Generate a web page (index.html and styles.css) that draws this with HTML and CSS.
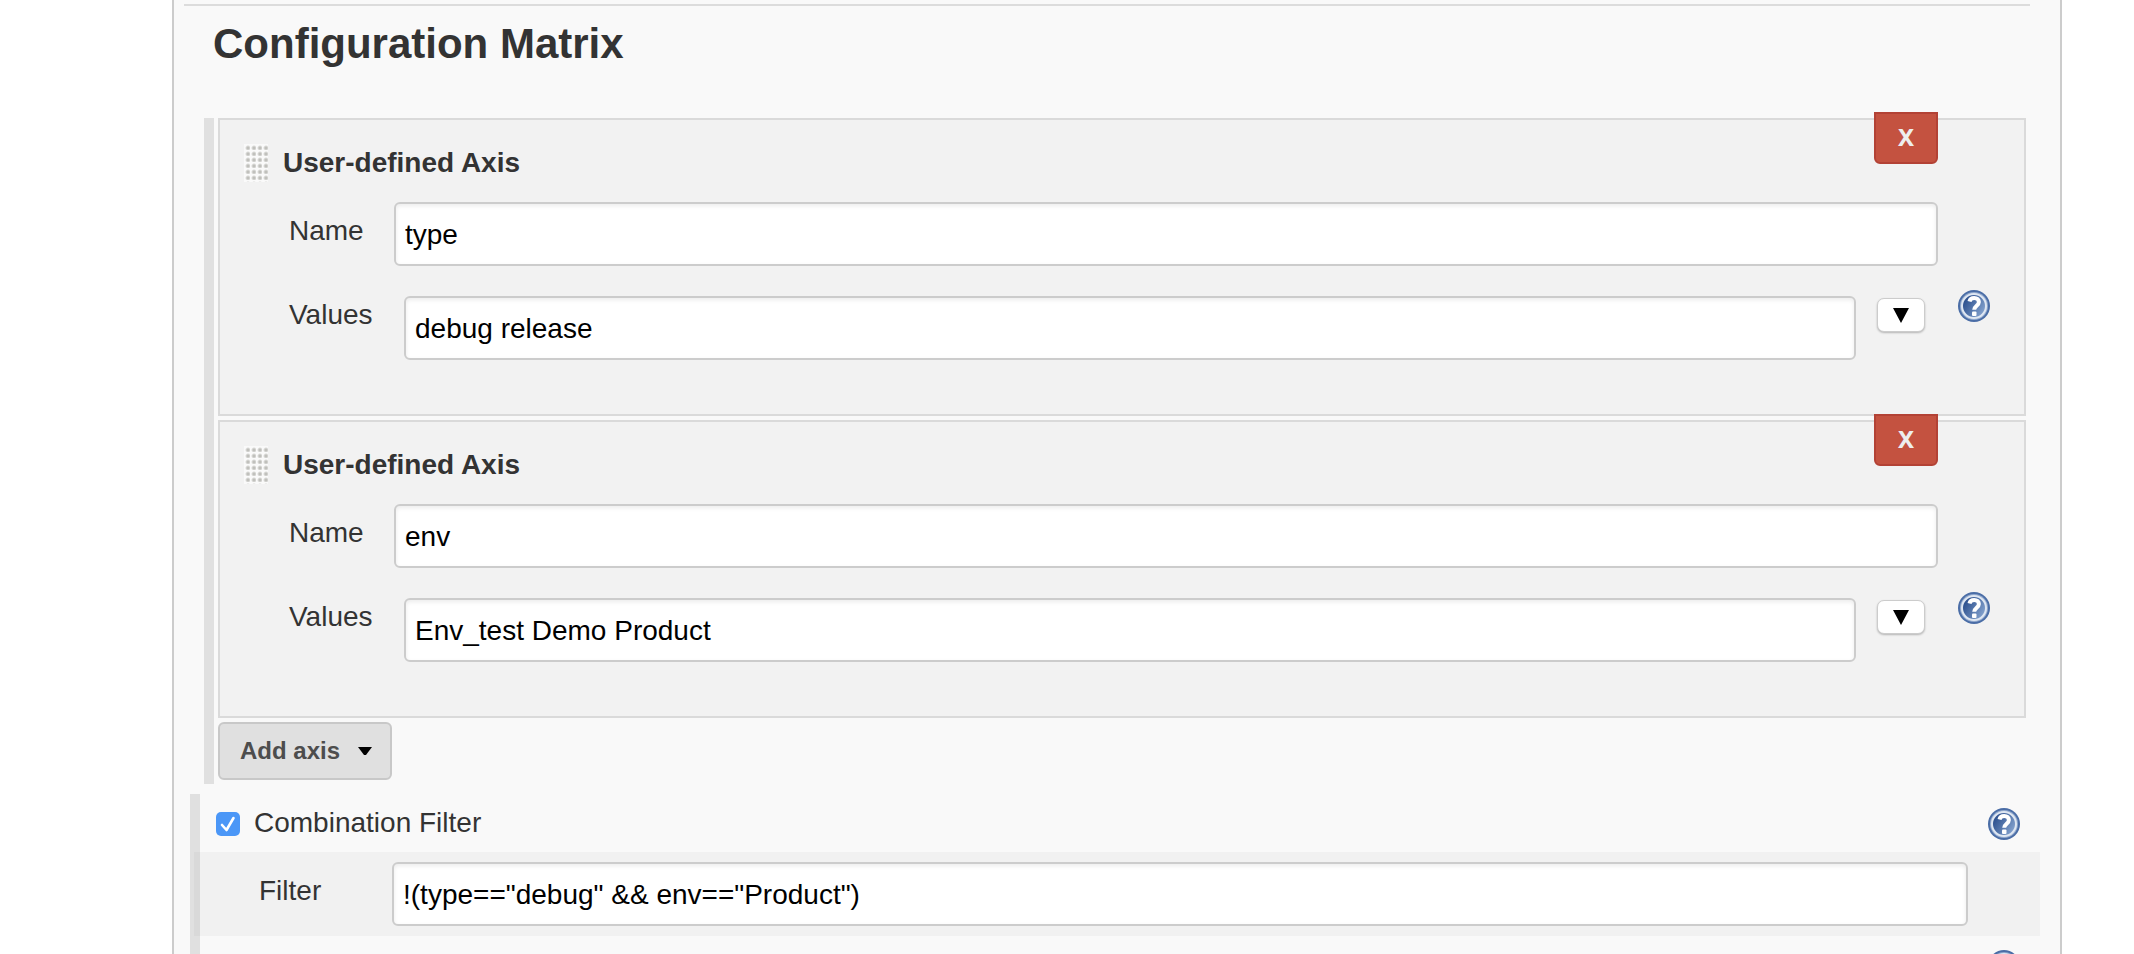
FILE: index.html
```html
<!DOCTYPE html>
<html lang="en">
<head>
<meta charset="utf-8">
<title>Configuration Matrix</title>
<link rel="stylesheet" href="styles.css">
</head>
<body>
<svg class="defs" aria-hidden="true">
  <defs>
    <linearGradient id="help-fill" x1="0" y1="0.2" x2="1" y2="0.8">
      <stop offset="0.1" stop-color="#2c508e"/>
      <stop offset="1" stop-color="#8ba9d3"/>
    </linearGradient>
    <symbol id="help-icon" viewBox="0 0 32 32">
      <circle cx="16" cy="16" r="16" fill="#4a6da6"/>
      <circle cx="16" cy="16" r="14" fill="#93aace"/>
      <circle cx="16" cy="16" r="12" fill="url(#help-fill)" stroke="#dfe7f2" stroke-width="2"/>
      <path d="M11.5 11.5C12 9 14 8 16.200 8c2.800 0 4.700 1.500 4.700 4 0 3.600-4.700 3.800-4.700 7.800" fill="none" stroke="#fff" stroke-width="4"/>
      <rect x="14" y="21.500" width="4.500" height="4.500" rx="1" fill="#fff"/>
    </symbol>
  </defs>
</svg>
<main class="panel">
  <hr class="divider">
  <h1 class="heading">Configuration Matrix</h1>

  <section class="axes">
    <article class="axis">
      <button class="remove" type="button">X</button>
      <header class="axis-head"><span class="grip"></span><h2 class="axis-title">User-defined Axis</h2></header>
      <div class="row name-row">
        <label class="label" for="name-1">Name</label>
        <input class="text" id="name-1" type="text" value="type">
      </div>
      <div class="row values-row">
        <label class="label" for="values-1">Values</label>
        <input class="text" id="values-1" type="text" value="debug release">
        <button class="expand" type="button" aria-label="Expand"><svg width="16" height="15" viewBox="0 0 16 15"><path d="M0 0h16L8 15z"/></svg></button>
        <button class="help" type="button" aria-label="Help"><svg width="32" height="32"><use href="#help-icon"/></svg></button>
      </div>
    </article>

    <article class="axis">
      <button class="remove" type="button">X</button>
      <header class="axis-head"><span class="grip"></span><h2 class="axis-title">User-defined Axis</h2></header>
      <div class="row name-row">
        <label class="label" for="name-2">Name</label>
        <input class="text" id="name-2" type="text" value="env">
      </div>
      <div class="row values-row">
        <label class="label" for="values-2">Values</label>
        <input class="text" id="values-2" type="text" value="Env_test Demo Product">
        <button class="expand" type="button" aria-label="Expand"><svg width="16" height="15" viewBox="0 0 16 15"><path d="M0 0h16L8 15z"/></svg></button>
        <button class="help" type="button" aria-label="Help"><svg width="32" height="32"><use href="#help-icon"/></svg></button>
      </div>
    </article>

    <button class="add" type="button">Add axis <svg width="14" height="8" viewBox="0 0 14 8"><path d="M0 0h14L8 8H6z"/></svg></button>
  </section>

  <section class="options">
    <div class="option">
      <input class="check" id="combination" type="checkbox" checked>
      <label class="option-label" for="combination">Combination Filter</label>
      <button class="help" type="button" aria-label="Help"><svg width="32" height="32"><use href="#help-icon"/></svg></button>
    </div>
    <div class="row filter-row">
      <label class="label" for="filter">Filter</label>
      <input class="text" id="filter" type="text" value="!(type==&quot;debug&quot; &amp;&amp; env==&quot;Product&quot;)">
    </div>
    <div class="option">
      <input class="check" id="sequential" type="checkbox">
      <label class="option-label" for="sequential">Run each configuration sequentially</label>
      <button class="help" type="button" aria-label="Help"><svg width="32" height="32"><use href="#help-icon"/></svg></button>
    </div>
  </section>
</main>
</body>
</html>
```
FILE: styles.css
```css
* {
  box-sizing: border-box;
}

body {
  margin: 0;
  height: 100vh;
  overflow: hidden;
  background: #fff;
  color: #333;
  font: 28px/32px "Liberation Sans", Arial, sans-serif;
}

button,
input {
  margin: 0;
  font: inherit;
}

svg {
  display: block;
}

.defs {
  position: absolute;
  width: 0;
  height: 0;
}

.panel {
  min-height: 100vh;
  margin: 0 72px 0 172px;
  padding-top: 4px;
  background: #f9f9f9;
  border: solid #ccc;
  border-width: 0 2px;
}

.divider {
  height: 2px;
  margin: 0 30px 0 10px;
  border: 0;
  background: #dcdcdc;
}

.heading {
  margin: 14px 39px 50px;
  font-size: 42px;
  line-height: 48px;
}

.axes {
  display: flex;
  flex-direction: column;
  gap: 4px;
  margin: 0 34px 10px 30px;
  padding: 0 0 4px 4px;
  border-left: 10px solid #e0e0e0;
}

.axis {
  position: relative;
  padding: 24px 0 54px;
  background: #f2f2f2;
  border: 2px solid #dadada;
}

.remove {
  position: absolute;
  top: -8px;
  right: 86px;
  width: 64px;
  height: 52px;
  padding: 0 0 2px;
  background: #c45240;
  border: 2px solid #b34235;
  border-radius: 0 0 6px 6px;
  color: #eee;
  font: bold 24px/32px "Noto Sans", "Open Sans", sans-serif;
}

.axis-head {
  display: flex;
  align-items: center;
  gap: 15px;
  padding-left: 24px;
}

.grip {
  width: 24px;
  height: 38px;
  background: radial-gradient(circle at 4px 4px, #c0c0bc 1px, #fafafa 3px) 0 0 / 6px 6px;
}

.axis-title {
  margin: 0;
  font-size: 28px;
  line-height: 32px;
}

.row {
  display: grid;
  align-items: start;
}

.name-row {
  grid-template-columns: 105px 1fr;
  margin-top: 20px;
  padding: 0 86px 0 69px;
}

.name-row .label,
.filter-row .label {
  padding-top: 13px;
}

.values-row {
  grid-template-columns: 115px 1fr auto 32px;
  margin-top: 24px;
  padding: 0 34px 0 69px;
}

.values-row .label {
  padding-top: 9px;
}

.text {
  width: 100%;
  height: 64px;
  padding: 2px 9px 0;
  background: #fff;
  border: 2px solid #ccc;
  border-radius: 6px;
  box-shadow: inset 0 2px 4px rgba(0, 0, 0, 0.08);
  color: #000;
}

.values-row .text {
  margin-top: 6px;
}

.expand {
  display: flex;
  align-items: center;
  justify-content: center;
  width: 48px;
  height: 34px;
  margin: 8px 33px 0 21px;
  padding: 0 1px 0 0;
  background: #fff;
  border: 1px solid #ccc;
  border-radius: 7px;
  box-shadow: 0 1px 2px rgba(0, 0, 0, 0.25);
}

.help {
  width: 32px;
  height: 32px;
  padding: 0;
  background: none;
  border: 0;
}

.add {
  display: flex;
  align-items: center;
  justify-content: space-between;
  align-self: flex-start;
  width: 174px;
  height: 58px;
  padding: 0 18px 0 20px;
  background: #e0e0e0;
  border: 2px solid #c8c8c8;
  border-radius: 6px;
  color: #4d4d4d;
  font-size: 24px;
  font-weight: bold;
}

.add svg {
  fill: #000;
}

.options {
  margin: 0 20px 0 16px;
  border-left: 10px solid #e0e0e0;
}

.option {
  display: flex;
  align-items: center;
  padding: 14px 20px 12px 16px;
}

.option .help {
  margin-left: auto;
}

.option-label {
  margin-left: 14px;
  padding-bottom: 2px;
  line-height: 30px;
}

.check {
  appearance: none;
  width: 24px;
  height: 24px;
  background: #fff;
  border: 1px solid #bbb;
  border-radius: 5px;
}

.check:checked {
  border: 0;
  background: #4b97f7 url('data:image/svg+xml,<svg xmlns="http://www.w3.org/2000/svg" viewBox="0 0 24 24"><path d="M6 13l4.500 5L17.500 6" fill="none" stroke="white" stroke-width="2.600" stroke-linecap="round" stroke-linejoin="round"/></svg>');
}

.filter-row {
  grid-template-columns: 133px 1fr;
  margin-left: -6px;
  padding: 10px 72px 10px 65px;
  background: rgba(0, 0, 0, 0.03);
}
```
